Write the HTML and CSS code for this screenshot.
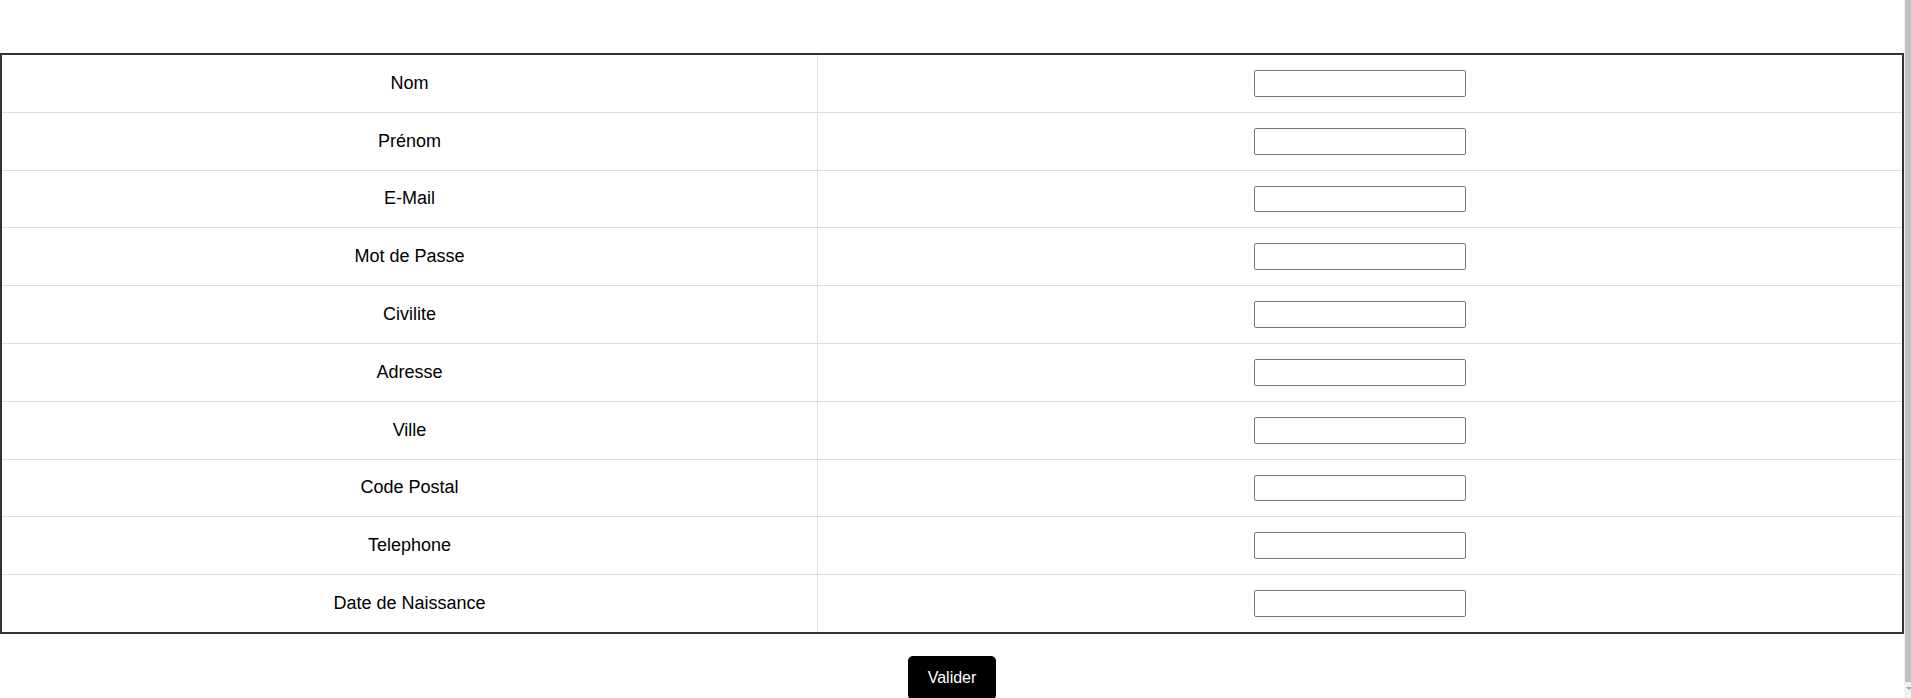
FILE: index.html
```html
<!DOCTYPE html>
<html lang="fr">
<head>
<meta charset="utf-8">
<title>Inscription</title>
<link rel="stylesheet" href="styles.css">
</head>
<body>
<main class="page">
  <form class="signup">
    <table class="form-table">
      <tbody>
        <tr><td class="label">Nom</td><td class="field"><input type="text" class="input"></td></tr>
        <tr><td class="label">Prénom</td><td class="field"><input type="text" class="input"></td></tr>
        <tr><td class="label">E-Mail</td><td class="field"><input type="text" class="input"></td></tr>
        <tr><td class="label">Mot de Passe</td><td class="field"><input type="password" class="input"></td></tr>
        <tr><td class="label">Civilite</td><td class="field"><input type="text" class="input"></td></tr>
        <tr><td class="label">Adresse</td><td class="field"><input type="text" class="input"></td></tr>
        <tr><td class="label">Ville</td><td class="field"><input type="text" class="input"></td></tr>
        <tr><td class="label">Code Postal</td><td class="field"><input type="text" class="input"></td></tr>
        <tr><td class="label">Telephone</td><td class="field"><input type="text" class="input"></td></tr>
        <tr><td class="label">Date de Naissance</td><td class="field"><input type="text" class="input"></td></tr>
      </tbody>
    </table>
    <div class="actions">
      <button type="submit" class="submit">Valider</button>
    </div>
  </form>
</main>
<div class="scrollbar"><div class="thumb"></div><div class="arrow"></div></div>
</body>
</html>
```

FILE: styles.css
```css
html, body {
  margin: 0;
  padding: 0;
  background: #ffffff;
  overflow: hidden;
}

body {
  font-family: "Liberation Sans", Arial, sans-serif;
  color: #000;
}

.page {
  width: 1904px;
  padding-top: 53px;
}

.form-table {
  width: 1904px;
  border-collapse: collapse;
  border: 2px solid #333333;
  font-size: 18px;
}

.form-table td {
  border: 1px solid #dddddd;
  padding: 15px 0;
  text-align: center;
  vertical-align: middle;
  line-height: normal;
}

.label {
  width: 815px;
}

.input {
  font-family: "Liberation Sans", Arial, sans-serif;
  font-size: 18px;
  width: 212px;
  height: 26.8px;
  box-sizing: border-box;
  padding: 1px 2px;
  border: 1px solid #767676;
  border-radius: 2px;
  margin: 0;
  vertical-align: middle;
  background: #fff;
}

.actions {
  display: flex;
  justify-content: center;
  padding-top: 22px;
}

.submit {
  font-family: "Liberation Sans", Arial, sans-serif;
  font-size: 16px;
  background: #000;
  color: #fff;
  border: none;
  border-radius: 5px;
  padding: 13px 20px;
  cursor: pointer;
}

.scrollbar {
  position: fixed;
  top: 0;
  right: 0;
  width: 7px;
  height: 100%;
  background: #f1f1f1;
}

.thumb {
  margin-left: 1px;
  height: 682px;
  background: #c1c1c1;
}

.arrow {
  margin: 5px 0 0 2px;
  width: 0;
  height: 0;
  border-left: 3px solid transparent;
  border-right: 3px solid transparent;
  border-top: 3px solid #a3a3a3;
}
```
